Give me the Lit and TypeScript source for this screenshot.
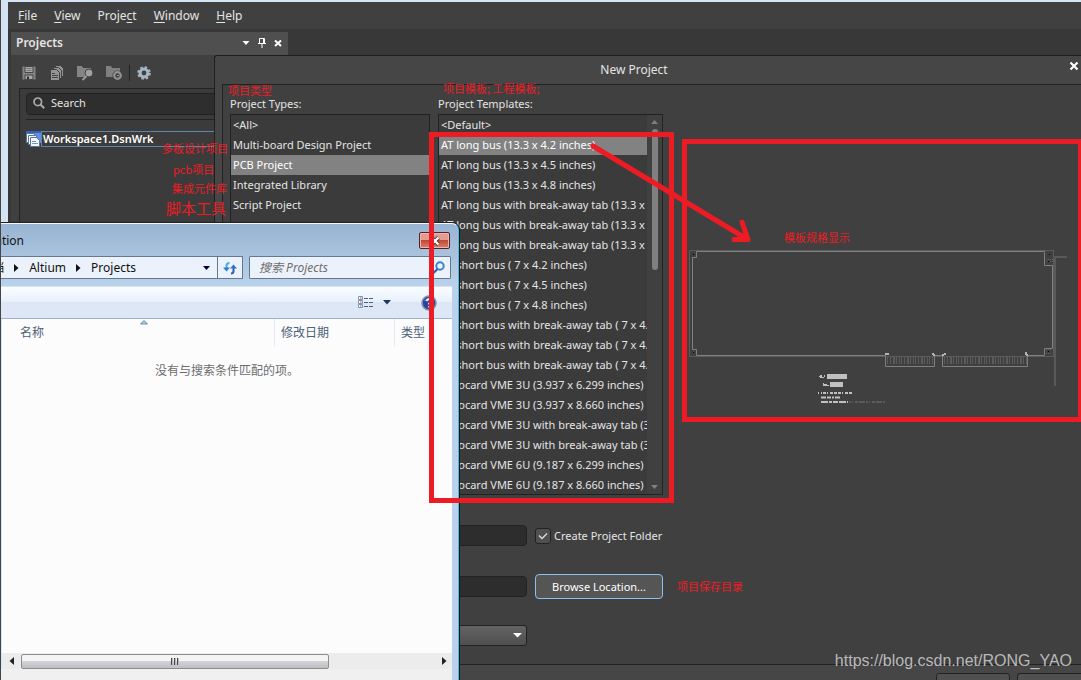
import { LitElement, html, css, svg } from "lit";
import { customElement, state } from "lit/decorators.js";
import { classMap } from "lit/directives/class-map.js";

const UI = css`"Noto Sans", "Open Sans", "Noto Sans CJK SC", sans-serif`;

const reset = css`
  * { box-sizing: border-box; }
  button, input, select { font: inherit; color: inherit; margin: 0; padding: 0; border: 0; background: none; }
  ul { list-style: none; margin: 0; padding: 0; }
  svg { display: block; }
`;

/* ---------- Main application window ---------- */
@customElement("main-window")
export class MainWindow extends LitElement {
  static styles = [reset, css`
    :host { display: flex; flex-direction: column; background: #383838; color: #e4e4e4; font: 12px/16px ${UI}; }
    .menu { display: flex; gap: 17px; padding: 6px 10px 5px; height: 27px; background: #404040; }
    .menu button { font-size: 12px; line-height: 16px; }
    .menu u { text-underline-offset: 2px; }
    .panel { flex: 1; display: flex; flex-direction: column; width: 277px; margin: 3px 0 0 3px; background: #404040; }
    .head { display: flex; align-items: center; height: 23px; padding: 0 2px 2px 5px; background: #4f4f4f; }
    .title { flex: 1; margin: 0; font-size: 12px; font-weight: 600; }
    .tools { display: flex; align-items: center; gap: 12px; height: 33px; padding: 3px 10px 0; }
    .sep { width: 1px; height: 16px; background: #222; margin: 0 -6px; }
    .tree { flex: 1; margin-left: 8px; border: 1px solid #222; border-right: 0; background: #3b3b3b; padding: 4px 0 0 6px; }
    .search { display: flex; align-items: center; gap: 6px; height: 22px; padding: 0 0 2px 6px; border: 1px solid #222; border-radius: 4px; background: #2e2e2e; }
    .search input { flex: 1; min-width: 0; font-size: 11px; }
    .search input::placeholder { color: #e4e4e4; opacity: 1; }
    .rule { height: 1px; margin: 4px 0 11px; background: #222; }
    .node { display: flex; align-items: center; }
    .node span { flex: 1; border: 1px solid #5d86ad; padding-left: 1px; line-height: 14px; font-size: 11px; font-weight: 600; color: #fff; }
  `];

  render() {
    return html`
      <nav class="menu">
        <button><u>F</u>ile</button><button><u>V</u>iew</button><button>Proje<u>c</u>t</button><button><u>W</u>indow</button><button><u>H</u>elp</button>
      </nav>
      <section class="panel">
        <div class="head">
          <h2 class="title">Projects</h2>
          <button aria-label="Panel menu"><svg width="16" height="16"><path d="M4.500 6h7l-3.500 4z" fill="#fff"/></svg></button>
          <button aria-label="Pin"><svg width="16" height="16"><path d="M5.500 3.500h5v5h-5zM9.500 3.500v5M4 8.500h8M8 9v4" fill="none" stroke="#fff"/></svg></button>
          <button aria-label="Close"><svg width="16" height="16"><path d="M5 5.500l6 5.500M11 5.500l-6 5.500" stroke="#fff" stroke-width="2"/></svg></button>
        </div>
        <div class="tools">
          <button aria-label="Save"><svg width="16" height="16"><path d="M1.500 1.500h13v13h-13z" fill="#858585"/><path d="M4 1.500h8v6H4z" fill="#a8a8a8" stroke="#454545"/><path d="M5.500 3.500h5M5.500 5.500h5" stroke="#777"/><path d="M4 10h8v4.500H4z" fill="#a8a8a8" stroke="#454545"/><path d="M6 11.500h2V14H6z" fill="#333"/></svg></button>
          <button aria-label="Save all"><svg width="16" height="16"><g fill="#959595" stroke="#404040"><path d="M6.500.500h5l3 3v8h-8z"/><path d="M4.500 2.500h5l3 3v8h-8z"/><path d="M1.500 4.500h6l3 3v8h-9z"/></g><path d="M3 8.500h3M3 10.500h6M3 12.500h6" stroke="#444"/></svg></button>
          <button aria-label="Open project"><svg width="17" height="16"><path d="M0 1h5l1 2h8v9H0z" fill="#858585"/><circle cx="12" cy="8" r="4" fill="#a0a0a0" stroke="#404040"/><path d="M9.500 11l-4 4" stroke="#999" stroke-width="2"/></svg></button>
          <button aria-label="Project options"><svg width="17" height="16"><path d="M0 1h5l1 2h8v9H0z" fill="#808080"/><circle cx="11.500" cy="10.500" r="5" fill="#404040"/><circle cx="11.500" cy="10.500" r="3.300" fill="none" stroke="#929292" stroke-width="2.200"/><path d="M11 10.500h2" stroke="#999"/></svg></button>
          <span class="sep"></span>
          <button aria-label="Settings"><svg width="16" height="16"><circle cx="8" cy="8" r="5.800" fill="none" stroke="#a6b7c2" stroke-width="2" stroke-dasharray="2.500 2.050"/><circle cx="8" cy="8" r="3.900" fill="none" stroke="#a6b7c2" stroke-width="3"/></svg></button>
        </div>
        <div class="tree">
          <label class="search">
            <svg width="12" height="12"><circle cx="4.800" cy="4.800" r="3.800" fill="none" stroke="#aaa" stroke-width="1.700"/><path d="M7.500 7.500l3.700 3.700" stroke="#aaa" stroke-width="2"/></svg>
            <input placeholder="Search" aria-label="Search">
          </label>
          <div class="rule"></div>
          <div class="node">
            <svg width="15" height="16"><path d="M0 0h15v12H0z" fill="#5f8fe0"/><path d="M0 0h15v2H0z" fill="#2f62c4"/><g fill="#f2f6fb" stroke="#5a769c"><path d="M.500 2.500h8v9h-8z"/><path d="M2.500 4.500h8v9h-8z"/><path d="M4.500 6.500h6l3 3v6h-9z"/></g><path d="M6 10.500h4M6 12.500h6" stroke="#7d96b8"/></svg>
            <span>Workspace1.DsnWrk</span>
          </div>
        </div>
      </section>`;
  }
}

/* ---------- New Project dialog ---------- */
const TYPES = ["<All>", "Multi-board Design Project", "PCB Project", "Integrated Library", "Script Project"];
const TEMPLATES = [
  "<Default>",
  "AT long bus (13.3 x 4.2 inches)", "AT long bus (13.3 x 4.5 inches)", "AT long bus (13.3 x 4.8 inches)",
  "AT long bus with break-away tab (13.3 x", "AT long bus with break-away tab (13.3 x", "AT long bus with break-away tab (13.3 x",
  "AT short bus ( 7 x 4.2 inches)", "AT short bus ( 7 x 4.5 inches)", "AT short bus ( 7 x 4.8 inches)",
  "AT short bus with break-away tab ( 7 x 4.", "AT short bus with break-away tab ( 7 x 4.", "AT short bus with break-away tab ( 7 x 4.",
  "Eurocard VME 3U (3.937 x 6.299 inches)", "Eurocard VME 3U (3.937 x 8.660 inches)",
  "Eurocard VME 3U with break-away tab (3", "Eurocard VME 3U with break-away tab (3",
  "Eurocard VME 6U (9.187 x 6.299 inches)", "Eurocard VME 6U (9.187 x 8.660 inches)",
];

const board = svg`
  <g fill="none">
    <path d="M373.500 120.500H9.500V226.500H374M373.500 120.500V226.500" stroke="#5b5b5b"/>
    <path d="M373 127H387M375 127V256" stroke="#595959" stroke-width="2"/>
    <path d="M16.500 121.500V127.500H12.500V219.500H16.500V225.500H205.500V236.500H254.500V225.500H262.500V236.500H347.500V225.500H364.500V218.500H372.500V135.500H364.500V121.500Z" stroke="#808080"/>
    <path d="M207 230.500H254M264 230.500H347" stroke="#5b5b5b" stroke-width="7" stroke-dasharray="1 2 1 2 2 1 1 2 1 1"/>
    <path d="M366 129.500H373M366 131.500H373M366 219.500H372M366 223.500H372" stroke="#606060" stroke-dasharray="1 1"/>
  </g>
  <path d="M13 124h1v1h-1zM13 222h1v1h-1zM369 124h1v1h-1zM368 131h1v1h-1zM368 221h1v1h-1z" fill="#000"/>
  <path d="M205 223h4v2h-4zM252 223h2v2h-2zM253 224h2v2h-2zM262 224h2v2h-2zM264 223h2v2h-2zM345 222h2v3h-2zM346 224h2v2h-2z" fill="#b4b4b4"/>
  <g fill="#c0c0c0"><path d="M147 244h20v5h-20zM150 252h13v5h-13z"/><path d="M139 246h2v1h-2zM140 245h2v3h-2zM142 247h2v1h-2zM144 245h1v2h-1zM143 253h1v3h-1zM144 254h3v2h-3zM147 255h2v1h-2z"/></g>
  <g fill="none" stroke="#c0c0c0" stroke-width="2"><path d="M138 263H139M141 263H142M143 263H148M150 263H163M165 263H173" stroke-dasharray="3 1"/><path d="M141 267.500H160" stroke-dasharray="5 1 4 1 2 1"/><path d="M141 272H168" stroke-dasharray="7 1 3 1 5 1"/><path d="M169 272H205" stroke="#5b5b5b" stroke-dasharray="2 1 1 2 3 1 6 1"/></g>
`;

@customElement("new-project-dialog")
export class NewProjectDialog extends LitElement {
  @state() type = 2;
  @state() template = 1;

  static styles = [reset, css`
    :host { display: flex; flex-direction: column; border: 1px solid #1e1e1e; border-right: 0; border-radius: 3px 0 0 0; background: #464646; color: #e4e4e4; font: 11px/20px ${UI}; }
    .bar { flex: none; display: flex; height: 28px; }
    .bar h1 { flex: 1; margin: 0; text-align: center; font-size: 12px; line-height: 28px; font-weight: 400; }
    .bar button { align-self: flex-start; width: 28px; padding: 2px 0 0 16px; }
    .body { flex: 1; min-height: 0; display: flex; margin-left: 7px; padding: 9px 0 0 7px; border: 1px solid #222; border-right: 0; background: #404040; }
    .left { display: flex; flex-direction: column; width: 433px; }
    .lists { flex: 1; min-height: 0; display: grid; grid-template: 20px minmax(0, 1fr) / 200px 225px; column-gap: 8px; }
    .list { display: flex; min-height: 0; border: 1px solid #222; background: #3b3b3b; overflow: hidden; }
    .list ul { flex: 1; min-width: 0; }
    .list li { height: 20px; padding-left: 2px; overflow: hidden; white-space: pre; }
    .list li.on { background: #828282; color: #fff; }
    .scroll { width: 15px; display: flex; flex-direction: column; align-items: center; padding: 4px 0; background: #404040; }
    .thumb { width: 6px; height: 141px; margin-top: 4px; border-radius: 3px; background: #808080; }
    .grow { flex: 1; }
    .form { display: grid; grid-template-columns: 297px 128px; column-gap: 8px; row-gap: 26px; grid-auto-rows: 25px; align-items: center; padding: 28px 0 14px; }
    .field { width: 100%; height: 21px; border: 1px solid #222; border-radius: 4px; background: #2d2d2d; }
    .check { display: flex; align-items: center; gap: 3px; white-space: nowrap; }
    .check input { appearance: none; width: 16px; height: 16px; border: 1px solid #222; border-radius: 3px; background: #505050; }
    .check .box { position: relative; display: flex; }
    .check svg { position: absolute; inset: 0; pointer-events: none; }
    .browse { height: 25px; border: 1px solid #8cc0f0; border-radius: 4px; background: #555; color: #fff; }
    .pick { position: relative; align-self: start; display: flex; }
    .pick select { appearance: none; width: 100%; height: 21px; border: 1px solid #222; border-radius: 3px; background: linear-gradient(#636363, #4f4f4f); }
    .pick svg { position: absolute; right: 5px; top: 7px; pointer-events: none; }
    .preview { flex: 1; min-width: 0; padding: 156px 0 0 26px; }
    .foot { flex: none; display: flex; justify-content: flex-end; gap: 7px; height: 38px; padding: 8px 0 0; }
    .foot button { width: 74px; height: 25px; border: 1px solid #222; border-radius: 3px; background: #505050; }
    .foot button:last-child { width: 64px; border-right: 0; border-radius: 3px 0 0 3px; }
  `];

  private list(items: string[], selected: number, pick: (i: number) => void) {
    return html`<ul role="listbox">${items.map((t, i) => html`
      <li role="option" aria-selected=${i === selected} class=${classMap({ on: i === selected })} @click=${() => pick(i)}>${t}</li>`)}</ul>`;
  }

  render() {
    return html`
      <header class="bar"><h1>New Project</h1>
        <button aria-label="Close"><svg width="10" height="16"><path d="M1.500 4.500l7 7M8.500 4.500l-7 7" stroke="#fff" stroke-width="2.200"/></svg></button>
      </header>
      <div class="body">
        <div class="left">
          <div class="lists">
            <span>Project Types:</span><span>Project Templates:</span>
            <div class="list">${this.list(TYPES, this.type, (i) => (this.type = i))}</div>
            <div class="list">
              ${this.list(TEMPLATES, this.template, (i) => (this.template = i))}
              <div class="scroll">
                <svg width="7" height="6"><path d="M0 5h7L3.500 1z" fill="#808080"/></svg>
                <div class="thumb"></div><div class="grow"></div>
                <svg width="7" height="6"><path d="M0 1h7L3.500 5z" fill="#808080"/></svg>
              </div>
            </div>
          </div>
          <div class="form">
            <input class="field" aria-label="Name">
            <label class="check"><span class="box"><input type="checkbox" checked><svg width="16" height="16"><path d="M4 7.500l3 3 5-5" fill="none" stroke="#ddd" stroke-width="1.300"/></svg></span>Create Project Folder</label>
            <input class="field" aria-label="Location">
            <button class="browse">Browse Location...</button>
            <span class="pick"><select aria-label="Repository"></select><svg width="9" height="6"><path d="M0 1h9L4.500 5.500z" fill="#fff"/></svg></span>
          </div>
        </div>
        <div class="preview"><svg width="380" height="156" viewBox="9 120 380 156">${board}</svg></div>
      </div>
      <footer class="foot"><button aria-label="Create"></button><button aria-label="Cancel"></button></footer>`;
  }
}

/* ---------- Folder browser ---------- */
@customElement("folder-browser")
export class FolderBrowser extends LitElement {
  static styles = [reset, css`
    :host { display: flex; flex-direction: column; padding-right: 6px; border: solid #35c4f0; border-width: 0 1px 0 0; border-top: 1px solid #f4f8fc; border-radius: 0 7px 0 0;
      box-shadow: 1px 0 0 #111, 0 -1px 0 #222; background: linear-gradient(#98b4d2, #b9d1ea 60px); color: #111; font: 12px/16px ${UI}; overflow: hidden; }
    .bar { display: flex; justify-content: space-between; height: 32px; padding-right: 2px; }
    .bar span { display: flex; justify-content: flex-end; width: 24px; line-height: 34px; overflow: hidden; }
    .x { display: grid; place-items: center; width: 31px; height: 17px; margin-top: 8px; border: 1px solid #54222a; border-radius: 2px; box-shadow: inset 0 0 0 1px #eeb5ad; background: linear-gradient(#e59c90 45%, #c14a36 50%, #d98070); }
    .nav { display: flex; gap: 6px; height: 30px; padding-right: 1px; }
    .box { display: flex; align-items: center; height: 23px; border: 1px solid #64798f; background: #ebf2fb; border-radius: 1px; }
    .path { flex: none; width: 243px; border-left: 0; }
    .crumbs { flex: none; display: flex; justify-content: flex-end; align-items: center; gap: 10px; width: 136px; overflow: hidden; }
    .crumbs span { flex: none; }
    .crumbs svg { flex: none; }
    .path button { display: grid; place-items: center; height: 21px; }
    .drop { width: 21px; margin-left: auto; }
    .refresh { width: 25px; border-left: 1px solid #64798f; }
    .find { flex: 1; min-width: 0; padding: 0 5px 0 9px; }
    .find input { flex: 1; min-width: 0; font-style: italic; }
    .find input::placeholder { color: #6e6e6e; opacity: 1; }
    .tools { display: flex; align-items: center; justify-content: flex-end; height: 33px; padding-right: 15px; gap: 9px; background: linear-gradient(#fbfdff, #e7f1fb 48%, #dce6f4 50%, #dde7f5); border-top: 1px solid #d5e3f2; border-bottom: 1px solid #9fb0ca; }
    .tools button:last-child { margin-left: 20px; }
    .pane { flex: 1; display: flex; flex-direction: column; margin-left: 1px; border-left: 1px solid #d6e5f5; background: #fcfcfc; }
    .cols { position: relative; display: grid; grid-template-columns: 272px 120px 1fr; height: 24px; line-height: 28px; color: #4c607a; }
    .cols span { padding-left: 6px; border-left: 1px solid #e0ecf8; }
    .cols span:first-child { padding-left: 18px; border: 0; }
    .cols svg { position: absolute; left: 138px; top: 1px; }
    .none { flex: 1; margin: 0; padding: 20px 0 0 153px; color: #6d6d6d; }
    .scroll { display: flex; align-items: center; height: 16px; background: #ececec; }
    .scroll button { display: grid; place-items: center; width: 19px; height: 16px; }
    .thumb { display: grid; place-items: center; width: 308px; height: 15px; border: 1px solid #8d8d8d; border-radius: 2px; background: linear-gradient(#f4f4f4 45%, #d2d2d5 50%, #bfbfc4); }
    .scroll button:last-child { width: 16px; margin-left: auto; }
    .foot { height: 11px; background: #f0f0f0; }
  `];

  render() {
    const sep = html`<svg width="5" height="8"><path d="M0 0v8l4.500-4z" fill="#111"/></svg>`;
    return html`
      <header class="bar"><span>ation</span>
        <button class="x" aria-label="Close"><svg width="12" height="10"><path d="M2.500 1.500l7 7M9.500 1.500l-7 7" stroke="#45333a" stroke-width="4"/><path d="M2.500 1.500l7 7M9.500 1.500l-7 7" stroke="#fff" stroke-width="2.400"/></svg></button>
      </header>
      <div class="nav">
        <div class="box path">
          <div class="crumbs"><span>档</span>${sep}<span>Altium</span>${sep}<span>Projects</span></div>
          <button class="drop" aria-label="Previous locations"><svg width="7" height="4"><path d="M0 0h7L3.500 4z" fill="#00003c"/></svg></button>
          <button class="refresh" aria-label="Refresh"><svg width="14" height="14"><path d="M3.500 9V5Q3.500 2 6.500 2" fill="none" stroke="#4aaed8" stroke-width="2"/><path d="M0 6.500h7l-3.500 4z" fill="#2f7fcf"/><path d="M10.500 6v4Q10.500 12.500 8 12.500" fill="none" stroke="#2c5cb4" stroke-width="2"/><path d="M7 7.500h7l-3.500-4z" fill="#3273c8"/></svg></button>
        </div>
        <label class="box find"><input placeholder="搜索 Projects" aria-label="搜索 Projects">
          <svg width="13" height="14"><circle cx="8" cy="5" r="3.700" fill="#e8f5fd" stroke="#3b84cc" stroke-width="2"/><path d="M5.500 8L1.500 12" stroke="#2c5fae" stroke-width="2.200"/></svg>
        </label>
      </div>
      <div class="tools">
        <button aria-label="View"><svg width="16" height="13"><g fill="#fff" stroke="#8494a8"><path d="M.500.500h4v3h-4zM.500 4.500h4v3h-4zM.500 8.500h4v3h-4z"/></g><path d="M2 2h1.500M2 10h1.500" stroke="#3b75c2"/><path d="M2 6h1.500" stroke="#e04a3a"/><path d="M6 2.500h4M11 2.500h4M6 6.500h4M11 6.500h4M6 10.500h4M11 10.500h4" stroke="#4a6284"/></svg></button>
        <button aria-label="View options"><svg width="9" height="5"><path d="M0 0h8L4 4.500z" fill="#1c3556"/></svg></button>
        <button aria-label="Help"><svg width="16" height="16"><circle cx="8" cy="8" r="7" fill="#2346a8" stroke="#8e939c" stroke-width="1.600"/><path d="M3 6q5-6 10 0" fill="#6e93df"/><path d="M5.800 6.200q0-2.200 2.200-2.200t2.200 2q0 1.200-2.200 2.500v1M8 11v1.600" fill="none" stroke="#fff" stroke-width="1.500"/></svg></button>
      </div>
      <div class="pane">
        <div class="cols"><span>名称</span><span>修改日期</span><span>类型</span><svg width="8" height="5"><path d="M.500 4L4 .500 7.500 4z" fill="#9ccbe2" stroke="#3c7394" stroke-width=".7"/></svg></div>
        <p class="none">没有与搜索条件匹配的项。</p>
        <div class="scroll">
          <button aria-label="Scroll left"><svg width="5" height="8"><path d="M5 0v8L.500 4z" fill="#222"/></svg></button>
          <div class="thumb"><svg width="9" height="7"><path d="M.500 0v7M3.500 0v7M6.500 0v7" stroke="#444"/><path d="M1.500 0v7M4.500 0v7M7.500 0v7" stroke="#bbb"/></svg></div>
          <button aria-label="Scroll right"><svg width="5" height="8"><path d="M0 0v8l4.500-4z" fill="#222"/></svg></button>
        </div>
      </div>
      <div class="foot"></div>`;
  }
}

/* ---------- Desktop with the overlapping windows and hand-made notes ---------- */
@customElement("app-root")
export class AppRoot extends LitElement {
  static styles = [reset, css`
    :host { display: block; position: relative; height: 100vh; overflow: hidden; background: #d5e4f3; border-left: 1px solid #444; }
    main-window, new-project-dialog, folder-browser, .marks, .note, .stamp { position: absolute; }
    main-window { inset: 2px 0 0 7px; }
    new-project-dialog { inset: 55px 0 -24px 213px; }
    folder-browser { inset: 223px auto 0 -1px; width: 459px; }
    .marks { left: -1px; top: 0; pointer-events: none; }
    .note { color: #ed1c24; font: 11px/14px "Noto Sans CJK SC", sans-serif; white-space: nowrap; }
    .note.big { font-size: 15px; line-height: 18px; }
    .n1 { left: 227px; top: 83px; }
    .n2 { left: 442px; top: 81px; }
    .n3 { left: 161px; top: 141px; }
    .n4 { left: 172px; top: 162px; }
    .n5 { left: 171px; top: 181px; }
    .n6 { left: 165px; top: 199px; }
    .n7 { left: 783px; top: 230px; }
    .n8 { left: 676px; top: 579px; }
    .stamp { right: 9px; bottom: 9px; color: #b9b9b9; font: 16px/20px "Liberation Sans", Arial, sans-serif; }
  `];

  render() {
    return html`
      <main-window></main-window>
      <new-project-dialog></new-project-dialog>
      <folder-browser></folder-browser>
      <svg class="marks" width="1081" height="680" fill="none" stroke="#ed1c24" stroke-width="5">
        <path d="M431.500 134.500h240v366h-240zM684.500 141.500h396v278h-396z"/>
        <path d="M593 146L747 239M742 222l6 17.500M734 239.500h13" stroke-linecap="round"/>
      </svg>
      <span class="note n1">项目类型</span>
      <span class="note n2">项目模板; 工程模板;</span>
      <span class="note n3">多板设计项目</span>
      <span class="note n4">pcb项目</span>
      <span class="note n5">集成元件库</span>
      <span class="note big n6">脚本工具</span>
      <span class="note n7">模板规格显示</span>
      <span class="note n8">项目保存目录</span>
      <span class="stamp">https://blog.csdn.net/RONG_YAO</span>`;
  }
}
